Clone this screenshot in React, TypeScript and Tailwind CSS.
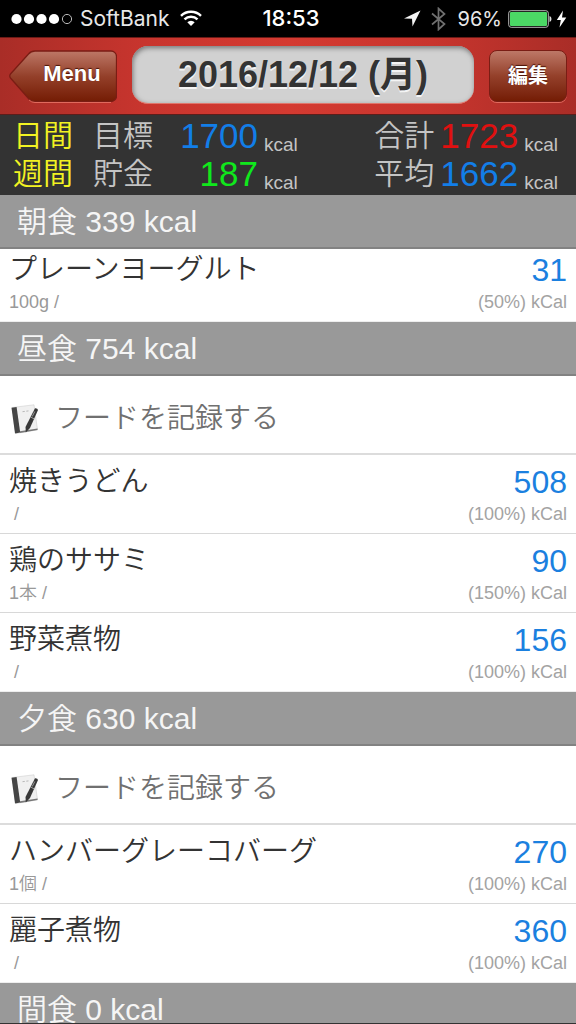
type Food = { name: string; amount: string; kcal: number; percent: number }

type Meal = { title: string; total: number; canRecord: boolean; foods: Food[] }

const MEALS: Meal[] = [
  {
    title: '朝食',
    total: 339,
    canRecord: false,
    foods: [{ name: 'プレーンヨーグルト', amount: '100g /', kcal: 31, percent: 50 }],
  },
  {
    title: '昼食',
    total: 754,
    canRecord: true,
    foods: [
      { name: '焼きうどん', amount: ' /', kcal: 508, percent: 100 },
      { name: '鶏のササミ', amount: '1本 /', kcal: 90, percent: 150 },
      { name: '野菜煮物', amount: ' /', kcal: 156, percent: 100 },
    ],
  },
  {
    title: '夕食',
    total: 630,
    canRecord: true,
    foods: [
      { name: 'ハンバーグレーコバーグ', amount: '1個 /', kcal: 270, percent: 100 },
      { name: '麗子煮物', amount: ' /', kcal: 360, percent: 100 },
    ],
  },
  { title: '間食', total: 0, canRecord: false, foods: [] },
]

const SUMMARY = [
  {
    period: '日間',
    left: { label: '目標', value: 1700, color: 'text-[#127ee8]' },
    right: { label: '合計', value: 1723, color: 'text-[#e01010]' },
  },
  {
    period: '週間',
    left: { label: '貯金', value: 187, color: 'text-[#10e81c]' },
    right: { label: '平均', value: 1662, color: 'text-[#127ee8]' },
  },
]

function StatusBar() {
  return (
    <div className="grid h-[37px] shrink-0 grid-cols-[1fr_auto_1fr] items-center bg-black pr-[5px] pl-[11px] font-['Inter','Liberation_Sans',sans-serif] text-[20px] text-[#e8e8e8]">
      <div className="flex items-center gap-[7px]">
        <svg width="62" height="12" viewBox="0 0 62 12" aria-hidden="true">
          {[5.5, 18, 30.5, 43].map((x) => (
            <circle key={x} cx={x} cy="6" r="5.1" fill="#fff" />
          ))}
          <circle cx="56" cy="6" r="4.6" fill="none" stroke="#bbb" />
        </svg>
        <span className="text-[21px]">SoftBank</span>
        <svg className="ml-1" width="22" height="17" viewBox="0 0 22 17" aria-hidden="true">
          <g fill="none" stroke="#fff" strokeWidth="2.4">
            <path d="M1 5.8a14.2 14.2 0 0 1 20 0" />
            <path d="M4.5 9.4a9.2 9.2 0 0 1 13 0" />
          </g>
          <path d="M7.3 12.2a5.2 5.2 0 0 1 7.4 0L11 16z" fill="#fff" />
        </svg>
      </div>
      <time className="text-[22px] font-medium text-white">18:53</time>
      <div className="flex items-center justify-end pr-1">
        <svg width="17" height="17" viewBox="0 0 17 17" aria-hidden="true">
          <path d="M16.5.5 0 8.4l8 .4.5 7.7z" fill="#f4f4f4" />
        </svg>
        <svg className="ml-2.5" width="15" height="24" viewBox="0 0 15 24" aria-hidden="true">
          <path
            d="M1 6.5 13.5 17 7.5 22.5V1.5L13.5 7 1 17.5"
            fill="none"
            stroke="#707070"
            strokeWidth="1.7"
          />
        </svg>
        <span className="ml-3">96%</span>
        <svg className="ml-1.5" width="44" height="18" viewBox="0 0 44 18" aria-hidden="true">
          <rect x=".7" y=".7" width="39.6" height="16.6" rx="2.5" fill="#000" stroke="#b8b8b8" />
          <rect x="2" y="2" width="37" height="14" rx="1" fill="#4bd865" />
          <path d="M41.5 6q2 .4 2 3t-2 3z" fill="#ddd" />
        </svg>
        <svg className="ml-1" width="11" height="18" viewBox="0 0 11 18" aria-hidden="true">
          <path d="M7 .5.8 10h4L3.5 17.5 10.3 7.5H6z" fill="#fff" />
        </svg>
      </div>
    </div>
  )
}

function Header() {
  return (
    <header className="flex h-[78px] shrink-0 items-start gap-[15px] border-t border-b border-t-[#6d1a16] border-b-[#5c1d1a] bg-[linear-gradient(90deg,#a92d27,#c8352e_25%,#d43a31_50%,#c8352e_75%,#a92d27)] px-[9px] pt-2">
      <button
        type="button"
        className="relative mt-1 h-[53px] w-[108px] pb-[5px] pl-[18px] text-[22px] leading-none font-bold text-white [text-shadow:0_-1px_1px_#4a1206]"
      >
        <svg
          className="absolute inset-0 size-full"
          viewBox="0 0 108 53"
          preserveAspectRatio="none"
          aria-hidden="true"
        >
          <defs>
            <linearGradient id="leather" x1="0" y1="0" x2="0" y2="1">
              <stop offset="0" stopColor="#bd7867" />
              <stop offset=".5" stopColor="#94402a" />
              <stop offset="1" stopColor="#741c04" />
            </linearGradient>
          </defs>
          <path
            d="M26 1h76a5.5 5.5 0 0 1 5.5 5.5v39.5a5.5 5.5 0 0 1-5.5 5.5H26q-4 0-6.500-3L1.500 28q-1.500-2 0-4L19.500 4Q22 1 26 1z"
            fill="url(#leather)"
            stroke="#7a1d14"
            strokeWidth="1.3"
          />
          <path d="M20 50q2.500 2.500 6 2.500h76" fill="none" stroke="#e06a5d" strokeWidth="1" />
        </svg>
        <span className="relative">Menu</span>
      </button>
      <button
        type="button"
        className="h-[58px] flex-1 rounded-2xl border-b border-[#e0766c] bg-[#d1d1d1] text-[36px] leading-[56px] font-bold whitespace-nowrap text-[#333] shadow-[inset_1px_2px_5px_#777] [text-shadow:0_2px_0_#f4f4f4]"
      >
        2016/12/12 (月)
      </button>
      <button
        type="button"
        className="mt-1 h-[52px] w-[78px] rounded-lg border border-[#7a1d14] bg-linear-to-b from-[#bd7867] via-[#94402a] to-[#741c04] text-[20px] font-bold text-white shadow-[0_1px_0_#e06a5d] [text-shadow:0_-1px_1px_#4a1206]"
      >
        編集
      </button>
    </header>
  )
}

type ReadingProps = { label: string; value: number; color: string; wide?: boolean }

function Reading({ label, value, color, wide }: ReadingProps) {
  return (
    <dl className="flex">
      <dt className="w-[60px] text-[#c4c4c4]">{label}</dt>
      <dd className="flex">
        <span className={`text-right text-[35px] ${wide ? 'w-[105px]' : 'w-[84px]'} ${color}`}>
          {value}
        </span>
        <span className="ml-[6px] pt-[9px] text-[19px] text-[#c4c4c4]">kcal</span>
      </dd>
    </dl>
  )
}

function Summary() {
  return (
    <section className="shrink-0 bg-[#333] py-[2px] pr-[18px] pl-[13px] text-[30px] font-[350]">
      {SUMMARY.map(({ period, left, right }) => (
        <div key={period} className="flex h-[38px] justify-between leading-[38px]">
          <div className="flex gap-5">
            <span className="text-[#f2f222]">{period}</span>
            <Reading {...left} wide />
          </div>
          <Reading {...right} />
        </div>
      ))}
    </section>
  )
}

function NotebookIcon() {
  return (
    <svg width="28" height="30" viewBox="0 0 28 30" aria-hidden="true">
      <path d="M1 3.500 23 .8l3.500 25L5 29.500z" fill="#f0f0f0" stroke="#d0d0d0" strokeWidth=".6" />
      <path d="M.5 3.800 5.600 3l3.600 25.600-5.200.9z" fill="#454545" />
      <path d="m9 29 17.500-3v-1.600L9 27.200z" fill="#777" />
      <path d="m11.500 7.700 2.300-.3m1.500-.2 2.200-.3" stroke="#aaa" strokeWidth=".8" />
      <path d="M24 4.300q2.700-.2 3 1.700L19 24l-4.200 4.500-.3-5.500z" fill="#383838" />
      <path d="m19.500 13 4 2M23.800 7.500l-2.600 5" stroke="#b0b0b0" strokeWidth=".8" />
    </svg>
  )
}

function FoodRow({ food, first }: { food: Food; first: boolean }) {
  return (
    <li
      className={`grid grid-cols-[1fr_auto] border-b border-[#d8d8d8] px-[9px] pb-[5px] font-[350] last:border-[#eee] ${first ? 'pt-[3px]' : 'pt-[9px]'}`}
    >
      <span className="text-[28px] leading-9 text-[#333]">{food.name}</span>
      <span className="text-right text-[32px] leading-9 text-[#1b80df]">{food.kcal}</span>
      <span className="text-[18px] leading-7 whitespace-pre text-[#999]">{food.amount}</span>
      <span className="text-right text-[18px] leading-7 text-[#a3a3a3]">({food.percent}%) kCal</span>
    </li>
  )
}

function MealSection({ meal }: { meal: Meal }) {
  return (
    <section>
      <h2 className="h-[54px] border-b-2 border-[#828282] bg-[#999] pl-[17px] text-[30px] leading-[53px] font-[350] text-[#f5f5f5]">
        {meal.title} {meal.total} kcal
      </h2>
      <ul>
        {meal.canRecord && (
          <li className="border-b-2 border-[#dcdcdc]">
            <button
              type="button"
              className="flex h-[77px] w-full items-center gap-4 pt-2 pl-[11px] text-left text-[28px] font-[350] text-[#707070]"
            >
              <NotebookIcon />
              フードを記録する
            </button>
          </li>
        )}
        {meal.foods.map((food) => (
          <FoodRow key={food.name} food={food} first={!meal.canRecord} />
        ))}
      </ul>
    </section>
  )
}

export default function App() {
  return (
    <div
      lang="ja"
      className="flex h-screen flex-col border-b border-[#333] bg-white font-['Liberation_Sans','Noto_Sans_CJK_JP',sans-serif]"
    >
      <StatusBar />
      <Header />
      <Summary />
      <main className="min-h-0 flex-1 overflow-y-auto [scrollbar-width:none]">
        {MEALS.map((meal) => (
          <MealSection key={meal.title} meal={meal} />
        ))}
      </main>
    </div>
  )
}
